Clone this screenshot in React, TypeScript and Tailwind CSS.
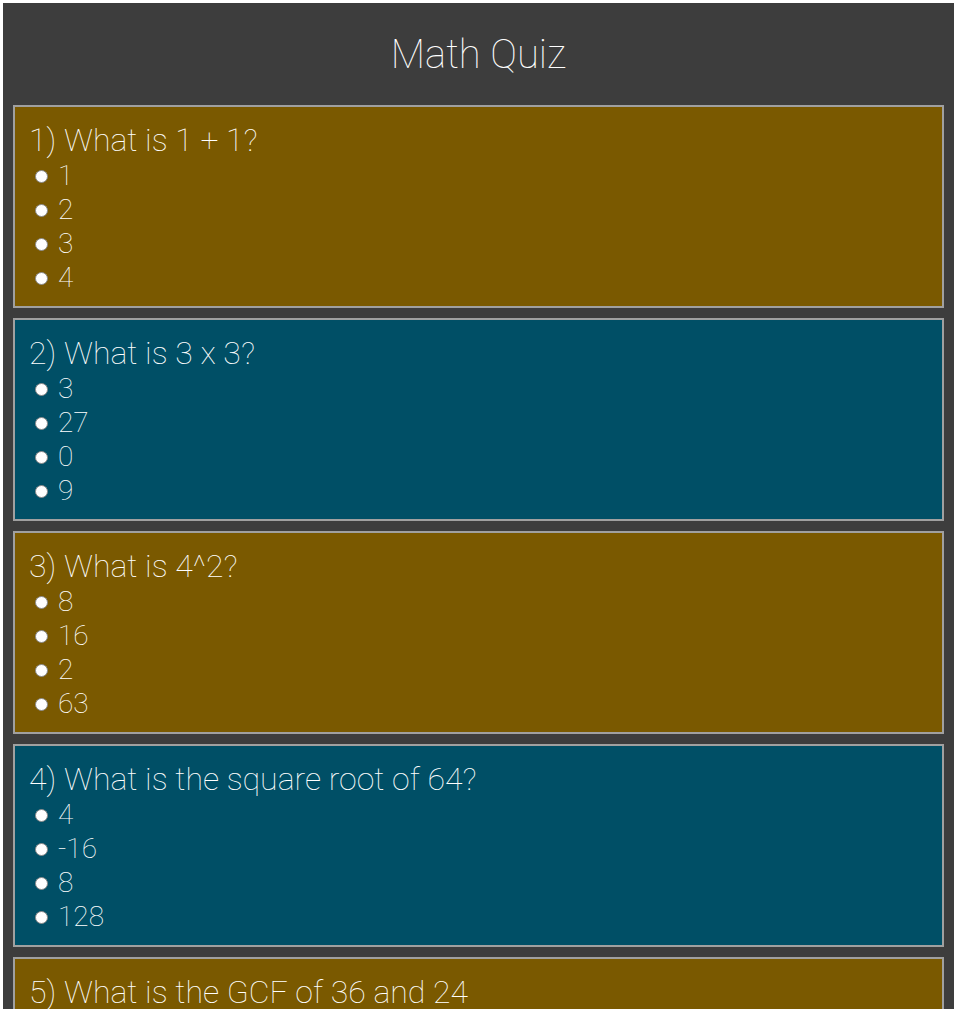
const questions = [
  { q: "What is 1 + 1?", options: ["1", "2", "3", "4"] },
  { q: "What is 3 x 3?", options: ["3", "27", "0", "9"] },
  { q: "What is 4^2?", options: ["8", "16", "2", "63"] },
  { q: "What is the square root of 64?", options: ["4", "-16", "8", "128"] },
  { q: "What is the GCF of 36 and 24", options: ["6", "12", "4", "2"] },
];

function Question({ index, q, options }: { index: number; q: string; options: string[] }) {
  const bg = index % 2 === 0 ? "bg-[#7a5900]" : "bg-[#004f66]";
  return (
    <div className={`${bg} border-2 border-[#a0a0a0] px-[14px] pt-[14px] pb-[11px]`}>
      <div className="text-[32px] leading-[38px] font-thin text-white">
        {index + 1}) {q}
      </div>
      {options.map((opt) => (
        <label key={opt} className="flex items-center h-[34px] text-[28px] font-thin text-white">
          <span className="ml-[6px] w-[13px] h-[13px] rounded-full bg-white border border-[#8a8a8a]" />
          <span className="ml-[10px]">{opt}</span>
        </label>
      ))}
    </div>
  );
}

export default function App() {
  return (
    <div className="bg-white px-[3px] pt-[3px] font-['Roboto',sans-serif]">
      <div className="bg-[#3d3d3d] min-h-screen px-[10px] pb-[10px]">
        <h1 className="pt-[28px] pb-[26px] text-center text-[40px] leading-[48px] font-thin text-white">
          Math Quiz
        </h1>
        <div className="flex flex-col gap-[10px]">
          {questions.map((item, i) => (
            <Question key={i} index={i} q={item.q} options={item.options} />
          ))}
        </div>
      </div>
    </div>
  );
}
